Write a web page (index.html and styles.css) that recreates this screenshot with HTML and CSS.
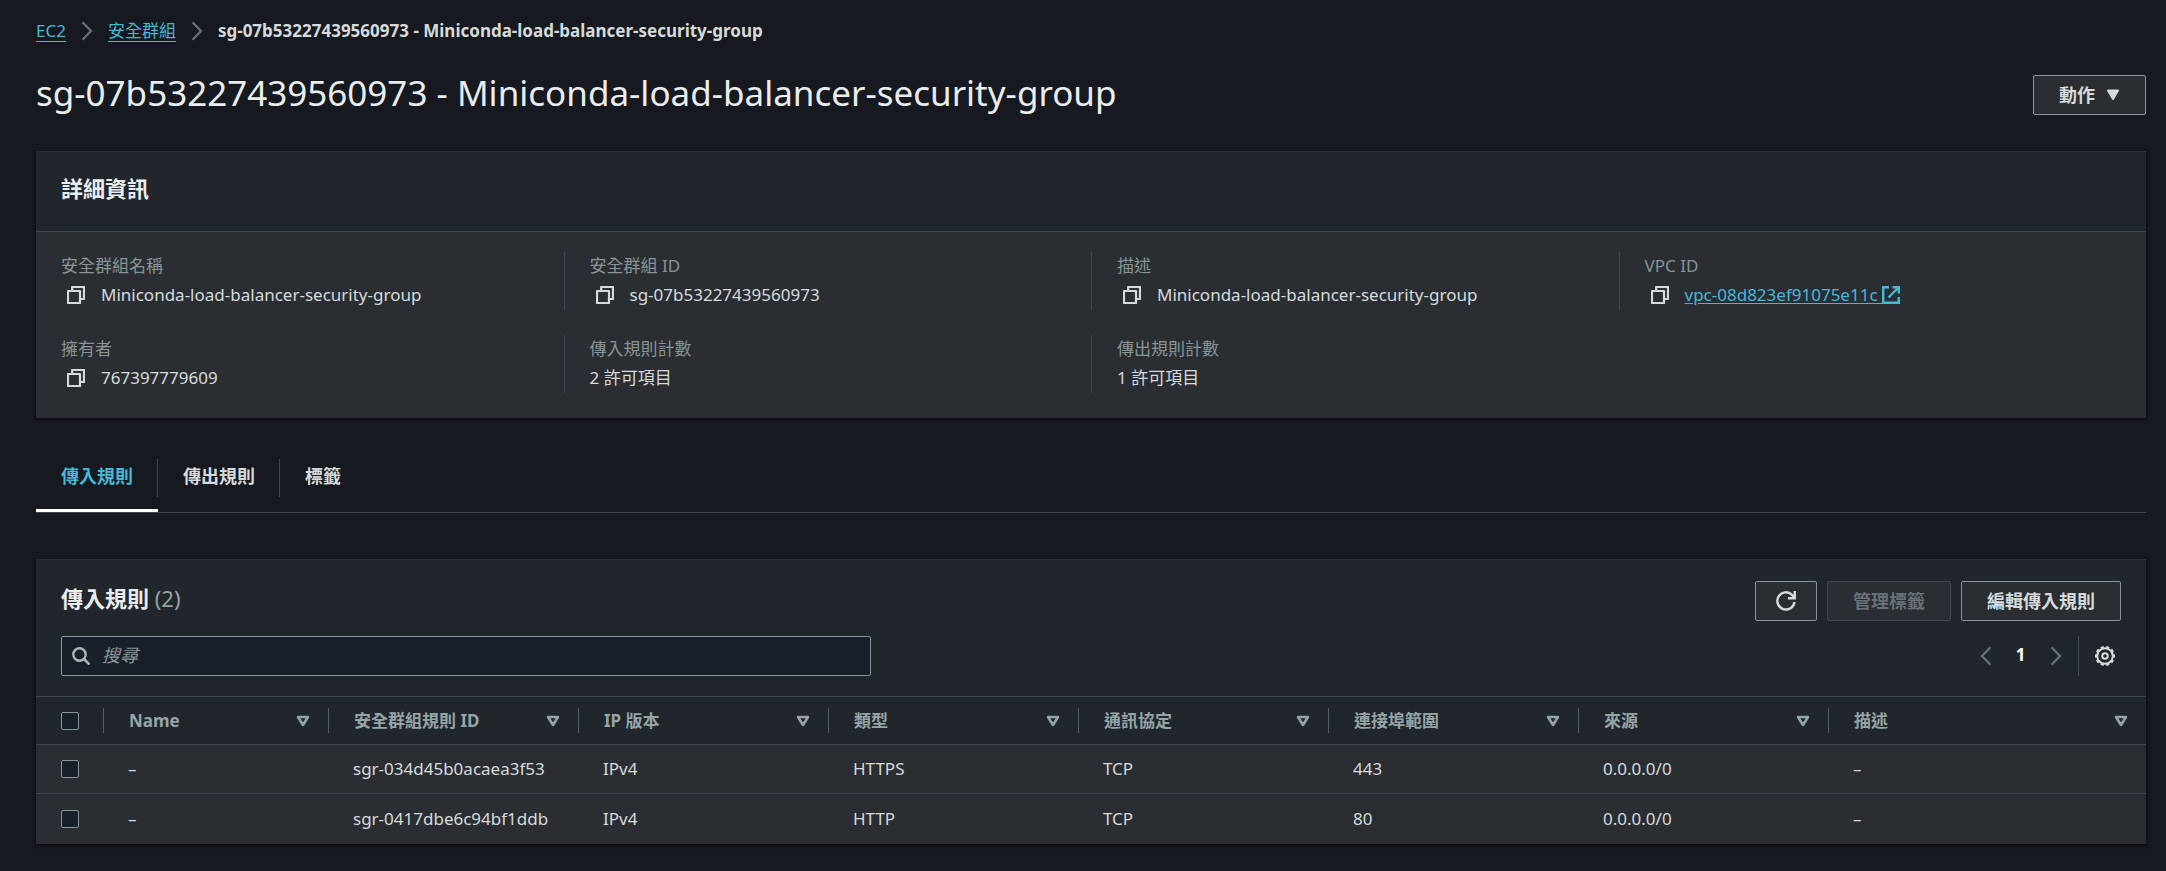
FILE: index.html
```html
<!DOCTYPE html>
<html lang="zh-Hant">
<head>
<meta charset="utf-8">
<title>sg-07b53227439560973 - Miniconda-load-balancer-security-group</title>
<link rel="stylesheet" href="styles.css">
</head>
<body>
<svg class="defs" width="0" height="0" aria-hidden="true">
  <symbol id="copy" viewBox="0 0 18 18"><path d="M1 5h12v12H1zM5.200 4.500V1H17v12h-3.500" fill="none" stroke="currentColor" stroke-width="2.200" stroke-linejoin="round"/></symbol>
  <symbol id="chevron" viewBox="0 0 12 20"><path d="M1.500 1.200l8.500 8.800-8.500 8.800" fill="none" stroke="currentColor" stroke-width="2.300"/></symbol>
  <symbol id="sort" viewBox="0 0 14 12"><path d="M2 2h10L7 10z" fill="none" stroke="currentColor" stroke-width="2.600" stroke-linejoin="round"/></symbol>
</svg>
<main class="page">
  <nav class="breadcrumbs" aria-label="Breadcrumbs">
    <a class="link" href="#">EC2</a>
    <svg class="crumb-sep"><use href="#chevron"/></svg>
    <a class="link" href="#">安全群組</a>
    <svg class="crumb-sep"><use href="#chevron"/></svg>
    <span class="crumb-current">sg-07b53227439560973 - Miniconda-load-balancer-security-group</span>
  </nav>

  <header class="page-header">
    <h1 class="page-title">sg-07b53227439560973 - Miniconda-load-balancer-security-group</h1>
    <button class="button" type="button">動作
      <svg class="caret" viewBox="0 0 14 12"><path d="M2 1.500h10L7 10z" fill="currentColor" stroke="currentColor" stroke-width="2" stroke-linejoin="round"/></svg>
    </button>
  </header>

  <section class="panel">
    <div class="panel-heading"><h2 class="panel-title">詳細資訊</h2></div>
    <dl class="details">
      <div class="detail"><dt class="label">安全群組名稱</dt><dd class="value"><button class="copy" type="button" aria-label="複製"><svg class="copy-icon"><use href="#copy"/></svg></button>Miniconda-load-balancer-security-group</dd></div>
      <div class="detail"><dt class="label">安全群組 ID</dt><dd class="value"><button class="copy" type="button" aria-label="複製"><svg class="copy-icon"><use href="#copy"/></svg></button>sg-07b53227439560973</dd></div>
      <div class="detail"><dt class="label">描述</dt><dd class="value"><button class="copy" type="button" aria-label="複製"><svg class="copy-icon"><use href="#copy"/></svg></button>Miniconda-load-balancer-security-group</dd></div>
      <div class="detail"><dt class="label">VPC ID</dt><dd class="value"><button class="copy" type="button" aria-label="複製"><svg class="copy-icon"><use href="#copy"/></svg></button><a class="link external" href="#">vpc-08d823ef91075e11c <svg class="external-icon" viewBox="0 0 18 18"><path d="M7 1.200H1.200v15.600h15.600V11M10.500 1.200h6.300v6.300M16.800 1.200L6.500 11.500" fill="none" stroke="currentColor" stroke-width="2.400"/></svg></a></dd></div>
      <div class="detail"><dt class="label">擁有者</dt><dd class="value"><button class="copy" type="button" aria-label="複製"><svg class="copy-icon"><use href="#copy"/></svg></button>767397779609</dd></div>
      <div class="detail"><dt class="label">傳入規則計數</dt><dd class="value">2 許可項目</dd></div>
      <div class="detail"><dt class="label">傳出規則計數</dt><dd class="value">1 許可項目</dd></div>
    </dl>
  </section>

  <div class="tabs" role="tablist">
    <button class="tab tab-active" type="button" role="tab" aria-selected="true"><span class="tab-label">傳入規則</span></button>
    <button class="tab" type="button" role="tab" aria-selected="false"><span class="tab-label">傳出規則</span></button>
    <button class="tab" type="button" role="tab" aria-selected="false"><span class="tab-label">標籤</span></button>
  </div>

  <section class="panel">
    <div class="rules-heading">
      <h2 class="panel-title">傳入規則 <span class="count">(2)</span></h2>
      <div class="actions">
        <button class="button button-icon" type="button" aria-label="重新整理"><svg class="refresh-icon" viewBox="0 0 20 20"><path d="M18.500 11A8.600 8.600 0 1 1 16 3.800L18.500 6.500M18.800 0v7.200H12" fill="none" stroke="currentColor" stroke-width="2.400"/></svg></button>
        <button class="button" type="button" disabled>管理標籤</button>
        <button class="button" type="button">編輯傳入規則</button>
      </div>
    </div>
    <div class="filter-bar">
      <div class="search">
        <svg class="search-icon" viewBox="0 0 18 18"><circle cx="7.500" cy="7.500" r="6.200" fill="none" stroke="currentColor" stroke-width="2.400"/><path d="M12 12l5.500 5.500" stroke="currentColor" stroke-width="2.600"/></svg>
        <input class="search-input" type="text" placeholder="搜尋" aria-label="搜尋">
      </div>
      <div class="pager">
        <button class="pager-button" type="button" aria-label="上一頁" disabled><svg class="pager-icon pager-prev"><use href="#chevron"/></svg></button>
        <button class="pager-button pager-page" type="button">1</button>
        <button class="pager-button" type="button" aria-label="下一頁" disabled><svg class="pager-icon"><use href="#chevron"/></svg></button>
        <button class="settings" type="button" aria-label="偏好設定"><svg class="gear-icon" viewBox="0 0 20 20" fill="none" stroke="currentColor" stroke-width="2"><circle cx="10" cy="10" r="7.800"/><circle cx="10" cy="10" r="9" pathLength="20" stroke-dasharray="1.100 0.900" stroke-dashoffset="0.550"/><circle cx="10" cy="10" r="2.800"/></svg></button>
      </div>
    </div>
    <table class="rules">
      <colgroup><col class="col-check"><col class="col-name"><col class="col-data"><col class="col-data"><col class="col-data"><col class="col-data"><col class="col-data"><col class="col-data"><col></colgroup>
      <thead>
        <tr>
          <th><input class="checkbox" type="checkbox" aria-label="全選"></th>
          <th><div class="head">Name<svg class="sort"><use href="#sort"/></svg></div></th>
          <th><div class="head">安全群組規則 ID<svg class="sort"><use href="#sort"/></svg></div></th>
          <th><div class="head">IP 版本<svg class="sort"><use href="#sort"/></svg></div></th>
          <th><div class="head">類型<svg class="sort"><use href="#sort"/></svg></div></th>
          <th><div class="head">通訊協定<svg class="sort"><use href="#sort"/></svg></div></th>
          <th><div class="head">連接埠範圍<svg class="sort"><use href="#sort"/></svg></div></th>
          <th><div class="head">來源<svg class="sort"><use href="#sort"/></svg></div></th>
          <th><div class="head">描述<svg class="sort"><use href="#sort"/></svg></div></th>
        </tr>
      </thead>
      <tbody>
        <tr><td><input class="checkbox" type="checkbox" aria-label="sgr-034d45b0acaea3f53"></td><td>–</td><td>sgr-034d45b0acaea3f53</td><td>IPv4</td><td>HTTPS</td><td>TCP</td><td>443</td><td>0.0.0.0/0</td><td>–</td></tr>
        <tr><td><input class="checkbox" type="checkbox" aria-label="sgr-0417dbe6c94bf1ddb"></td><td>–</td><td>sgr-0417dbe6c94bf1ddb</td><td>IPv4</td><td>HTTP</td><td>TCP</td><td>80</td><td>0.0.0.0/0</td><td>–</td></tr>
      </tbody>
    </table>
  </section>
</main>
</body>
</html>
```
FILE: styles.css
```css
* { box-sizing: border-box; }

body {
  margin: 0;
  background: #16191f;
  color: #d5dbdb;
  font: 17px/28px "Noto Sans", "Noto Sans CJK TC", sans-serif;
}

button, input { font: inherit; color: inherit; }
button { margin: 0; padding: 0; border: 0; background: none; }
svg { flex: none; }
.defs { position: absolute; }

.page { padding: 16px 20px 28px 36px; }

.link { color: #44b9d6; text-decoration: underline; text-underline-offset: 4px; }

.breadcrumbs { display: flex; align-items: center; gap: 15px; height: 30px; }
.crumb-sep { width: 12px; height: 20px; color: #687078; }
.crumb-current { font-weight: 700; }

.page-header { display: flex; align-items: center; justify-content: space-between; margin: 25px 0 32px; }
.page-title { margin: 0; padding-bottom: 5px; color: #eaeded; font-size: 35px; font-weight: 400; line-height: 43px; }

.button {
  display: flex;
  align-items: center;
  gap: 11px;
  height: 40px;
  padding: 0 25px;
  border: 1px solid #879596;
  border-radius: 2px;
  background: #2a2e33;
  font-size: 18px;
  font-weight: 700;
}
.button:disabled { border-color: #414750; color: #687078; }
.button-icon { padding: 0 20px; }
.caret { width: 14px; height: 12px; }
.refresh-icon { width: 20px; height: 20px; }

.panel { background: #21252c; border-top: 1px solid #2a2e33; box-shadow: 0 1px 2px 1px #0b0d10; }
.panel-heading { padding: 19px 25px 26px; }
.panel-title { margin: 0; color: #eaeded; font-size: 22px; font-weight: 700; line-height: 34px; }
.count { color: #95a5a6; font-weight: 400; }

.details {
  display: grid;
  grid-template-columns: repeat(4, 1fr);
  row-gap: 25px;
  margin: 0;
  padding: 20px 0 25px;
  border-top: 1px solid #414750;
  background: #2a2e33;
}
.detail { padding: 0 25px; border-left: 1px solid #414750; }
.detail:nth-child(4n+1) { border-left: 0; }
.label { color: #879596; line-height: 27px; }
.value { display: flex; align-items: center; margin: 0; height: 31px; }
.copy { display: flex; padding: 0 16px 0 6px; }
.copy-icon { width: 18px; height: 18px; }
.external { text-underline-offset: 2px; }
.external-icon { width: 18px; height: 18px; vertical-align: -3px; }

.tabs { display: flex; margin-top: 32px; border-bottom: 1px solid #414750; }
.tab { padding: 9px 0 12px; border-bottom: 3px solid transparent; font-size: 18px; font-weight: 700; }
.tab-label { display: block; padding: 2px 24px 6px 25px; border-right: 1px solid #414750; line-height: 30px; }
.tab:last-child .tab-label { border-right-color: transparent; }
.tab-active { border-bottom-color: #fff; color: #44b9d6; }
.tabs + .panel { margin-top: 46px; }

.rules-heading { display: flex; align-items: flex-start; justify-content: space-between; padding: 21px 25px 0; }
.actions { display: flex; gap: 10px; }
.filter-bar { display: flex; align-items: center; justify-content: space-between; padding: 15px 25px 20px; }
.search { display: flex; align-items: center; width: 39.300%; height: 40px; padding-left: 10px; border: 1px solid #879596; border-radius: 2px; background: #1a2029; }
.search-icon { width: 18px; height: 18px; color: #aab7b8; }
.search-input { flex: 1; margin-left: 12px; padding: 0 0 3px; border: 0; outline: 0; background: none; font-size: 18px; }
.search-input::placeholder { color: #879596; font-style: italic; opacity: 1; }

.pager { display: flex; align-items: center; }
.pager-button { display: flex; align-items: center; justify-content: center; width: 35px; height: 40px; }
.pager-button:disabled { color: #687078; }
.pager-page { padding-bottom: 2px; color: #fff; font-weight: 700; }
.pager-icon { width: 12px; height: 20px; }
.pager-prev { transform: rotate(180deg); }
.settings { display: flex; align-items: center; height: 40px; margin-left: 5px; padding: 0 6px 0 16px; border-left: 1px solid #414750; }
.gear-icon { width: 20px; height: 20px; }

.rules { width: 100%; table-layout: fixed; border-collapse: collapse; }
.col-check { width: 67px; }
.col-name { width: 225px; }
.col-data { width: 250px; }
.rules th, .rules td { height: 49px; padding: 0 25px; border-top: 1px solid #414750; text-align: left; }
.rules th { height: 48px; padding: 0; color: #95a5a6; font-weight: 700; }
.rules th:first-child { padding-left: 25px; }
.rules td { background: #2a2e33; }
.rules td:first-child { padding-right: 0; }
.rules tr:last-child td { height: 50px; }
.head { display: flex; align-items: center; justify-content: space-between; height: 25px; padding: 0 18px 0 25px; border-left: 1px solid #545b64; }
.sort { width: 14px; height: 12px; }
.checkbox { display: block; appearance: none; width: 18px; height: 18px; margin: 0; border: 1px solid #879596; border-radius: 2px; background: #1a2029; }
```
